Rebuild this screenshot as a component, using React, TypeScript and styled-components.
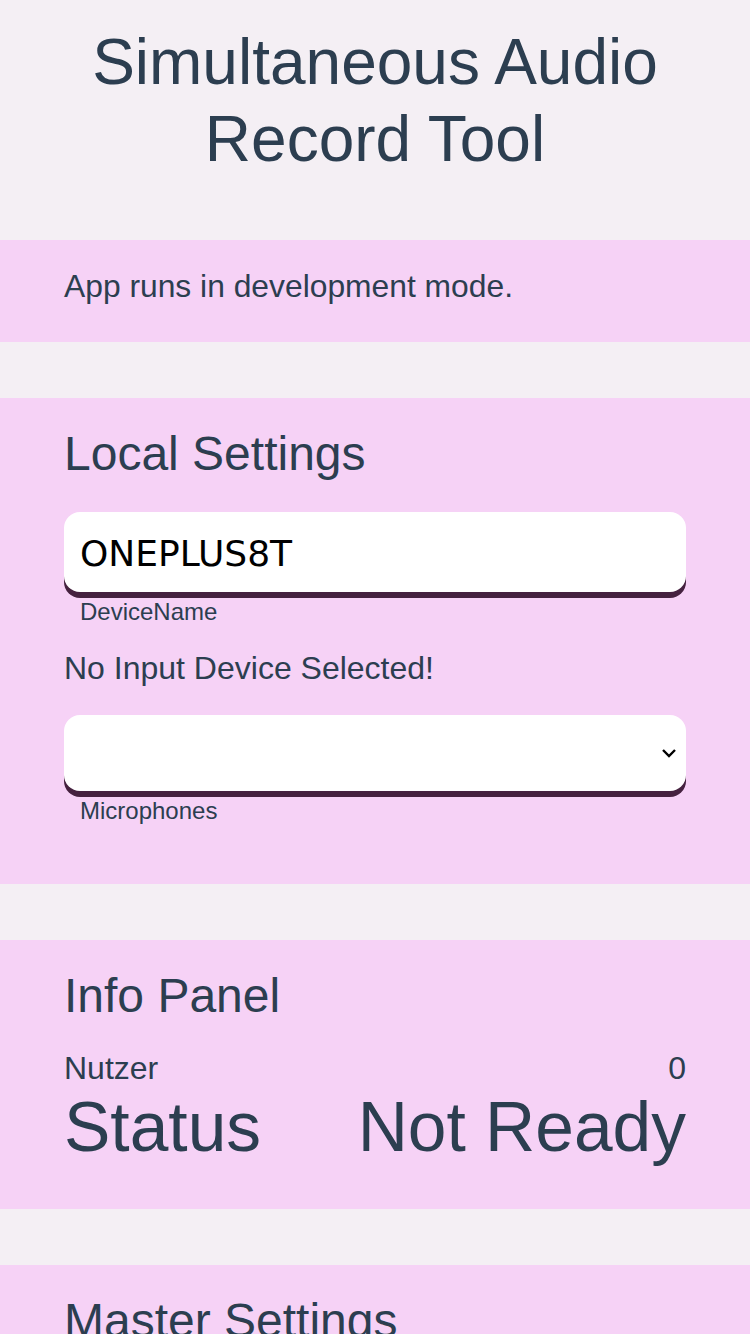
import React from "react";
import styled, { createGlobalStyle } from "styled-components";

const GlobalStyle = createGlobalStyle`
  html, body {
    margin: 0;
    padding: 0;
    background: #f4eff4;
  }
  body {
    font-family: "Liberation Sans", Arial, sans-serif;
    color: #2c3e50;
  }
  * { box-sizing: border-box; }
`;

const Page = styled.div`
  width: 750px;
  min-height: 1334px;
  background: #f4eff4;
  display: flex;
  flex-direction: column;
  gap: 56px;
`;

const Header = styled.header`
  padding: 24px 0 6px;
`;

const Title = styled.h1`
  margin: 0;
  font-weight: 400;
  font-size: 64px;
  line-height: 76.8px;
  text-align: center;
  color: #2c3e50;
`;

const Panel = styled.section<{ $top?: number; $bottom?: number }>`
  background: #f6d2f6;
  padding: ${(p) => p.$top ?? 28}px 64px ${(p) => p.$bottom ?? 40}px;
  display: flex;
  flex-direction: column;
`;

const Notice = styled.p`
  margin: 0;
  font-size: 31.8px;
  line-height: 36.8px;
`;

const Heading = styled.h2`
  margin: 0;
  font-weight: 400;
  font-size: 48px;
  line-height: 55px;
`;

const Field = styled.div<{ $mt: number }>`
  margin-top: ${(p) => p.$mt}px;
  display: flex;
  flex-direction: column;
`;

const InputBox = styled.input`
  width: 100%;
  height: 80px;
  border: none;
  outline: none;
  border-radius: 16px;
  background: #ffffff;
  box-shadow: 0 6px 0 #45213f;
  padding: 2px 16px 0;
  font-family: "DejaVu Sans", sans-serif;
  font-size: 36px;
  color: #000000;
`;

const SelectWrap = styled.div`
  position: relative;
  width: 100%;
`;

const SelectBox = styled.select`
  width: 100%;
  height: 76px;
  border: none;
  outline: none;
  border-radius: 16px;
  background: #ffffff;
  box-shadow: 0 6px 0 #45213f;
  padding: 0 16px;
  appearance: none;
  -webkit-appearance: none;
  font-family: "DejaVu Sans", sans-serif;
  font-size: 32px;
  color: #000;
`;

const Chevron = styled.svg`
  position: absolute;
  right: 9px;
  top: 32px;
  width: 16px;
  height: 12px;
  pointer-events: none;
`;

const FieldLabel = styled.label`
  margin-top: 6px;
  padding-left: 16px;
  font-size: 24px;
  line-height: 27.6px;
`;

const Message = styled.p<{ $mt: number }>`
  margin: ${(p) => p.$mt}px 0 0;
  font-size: 32px;
  line-height: 36.8px;
`;

const InfoRow = styled.div<{ $size: number; $mt?: number }>`
  display: flex;
  justify-content: space-between;
  align-items: baseline;
  margin-top: ${(p) => p.$mt ?? 0}px;
  font-size: ${(p) => p.$size}px;
  line-height: ${(p) => Math.round(p.$size * 1.15)}px;
`;

export default function App() {
  return (
    <>
      <GlobalStyle />
      <Page>
        <Header>
          <Title>
            Simultaneous Audio
            <br />
            Record Tool
          </Title>
        </Header>

        <Panel $top={28} $bottom={38}>
          <Notice>App runs in development mode.</Notice>
        </Panel>

        <Panel $top={28} $bottom={60}>
          <Heading>Local Settings</Heading>
          <Field $mt={31}>
            <InputBox defaultValue="ONEPLUS8T" />
            <FieldLabel>DeviceName</FieldLabel>
          </Field>
          <Message $mt={24}>No Input Device Selected!</Message>
          <Field $mt={28}>
            <SelectWrap>
              <SelectBox defaultValue="">
                <option value=""></option>
              </SelectBox>
              <Chevron viewBox="0 0 16 12">
                <path d="M2 3 L8 9 L14 3" fill="none" stroke="#000" strokeWidth="2.4" />
              </Chevron>
            </SelectWrap>
            <FieldLabel>Microphones</FieldLabel>
          </Field>
        </Panel>

        <Panel $top={28} $bottom={42}>
          <Heading>Info Panel</Heading>
          <InfoRow $size={32} $mt={27}>
            <span>Nutzer</span>
            <span>0</span>
          </InfoRow>
          <InfoRow $size={69.5}>
            <span>Status</span>
            <span>Not Ready</span>
          </InfoRow>
        </Panel>

        <Panel $top={28} $bottom={40}>
          <Heading>Master Settings</Heading>
        </Panel>
      </Page>
    </>
  );
}
